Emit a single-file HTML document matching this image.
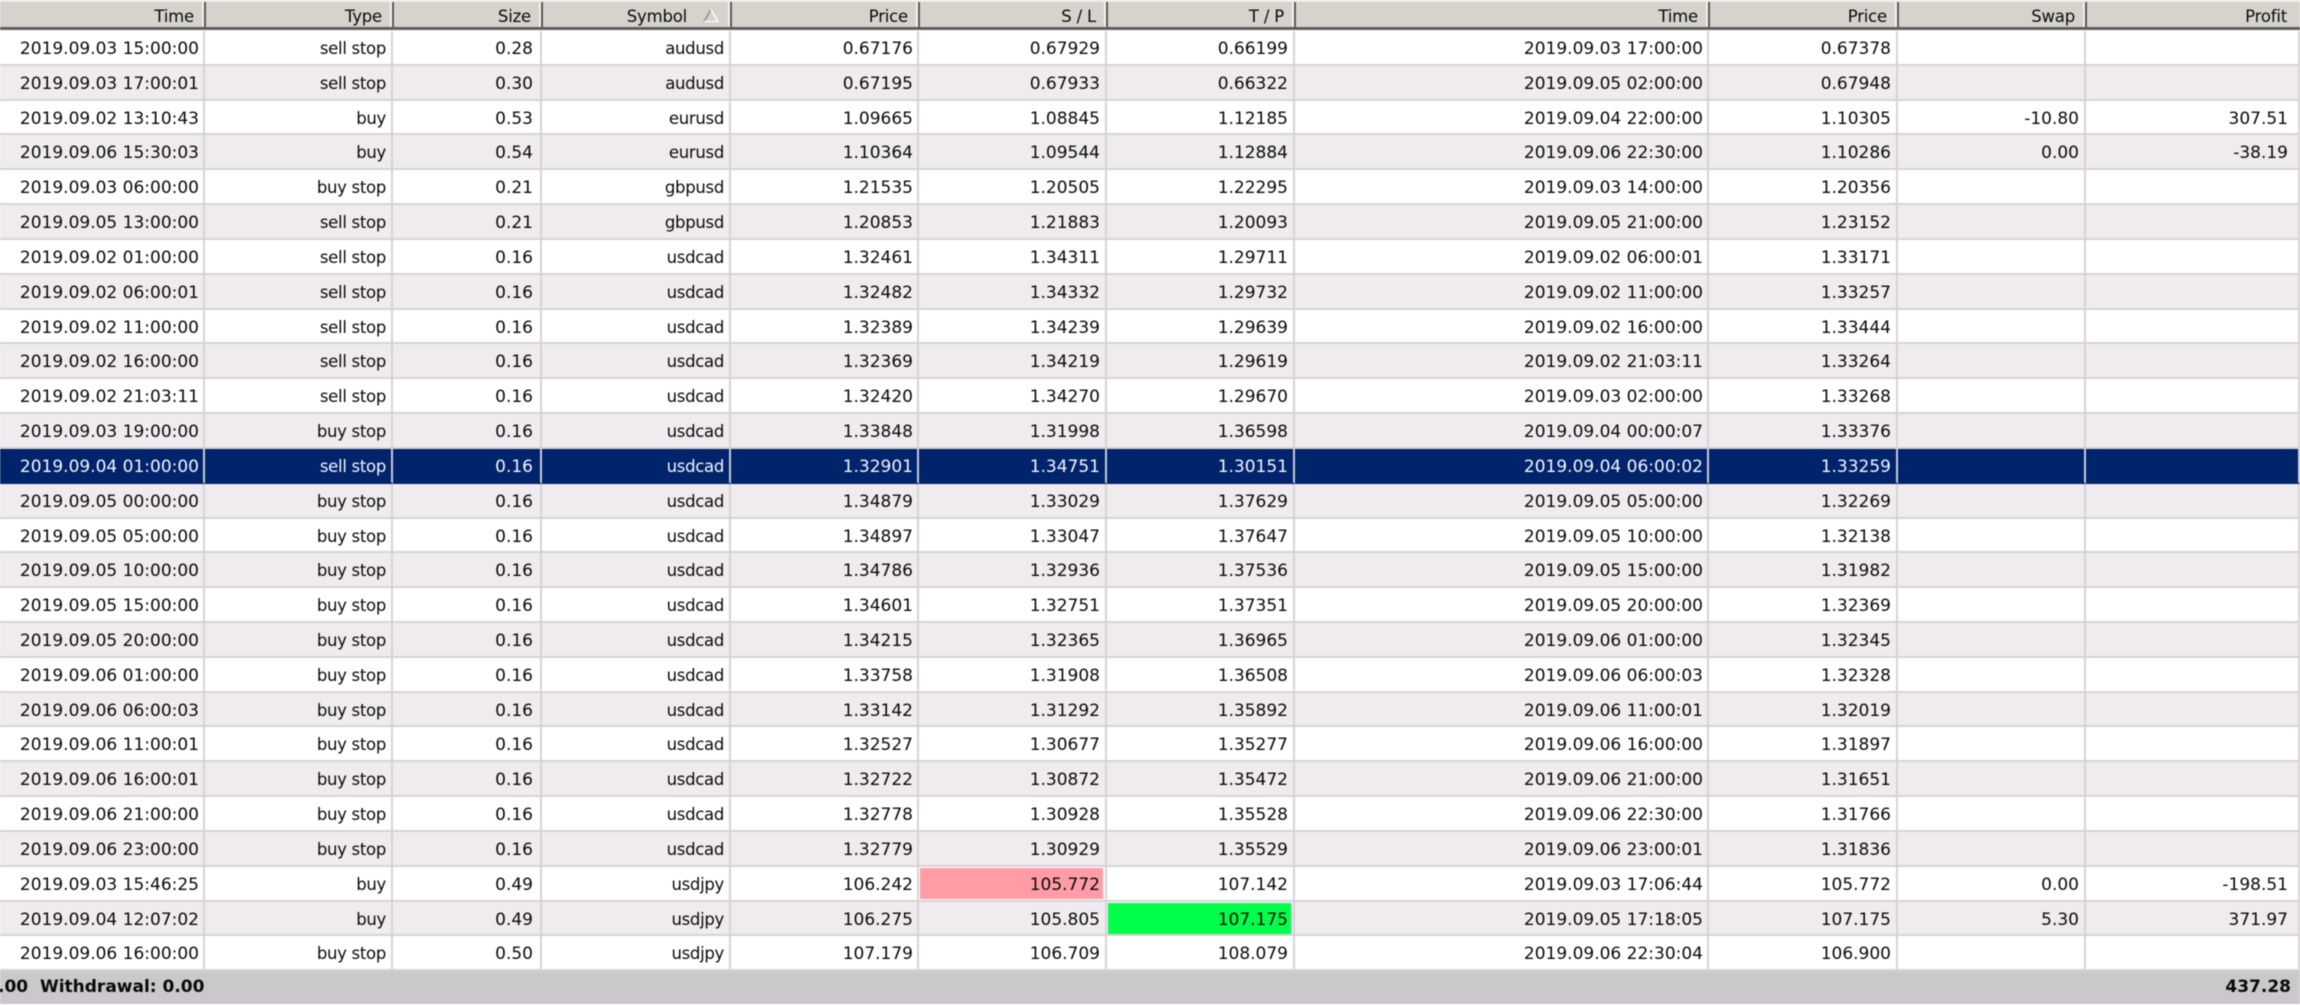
<!DOCTYPE html>
<html><head><meta charset="utf-8"><style>
html,body{margin:0;padding:0;background:#fff}
body{width:2300px;height:1004px;overflow:hidden;position:relative;font:17px/1 "DejaVu Sans","Liberation Sans",sans-serif;color:#0a0a0a}
#w{position:absolute;left:0;top:0;width:2300px;height:1004px;filter:blur(.45px)}
.h,.r{display:grid;position:absolute;left:0;width:2300px}
.h{grid-template-columns:204px 188px 149px 189px 188px 188px 188px 414px 189px 188px 215px;top:0;height:30px;background:#d6d3cd;box-sizing:border-box;border-bottom:3px solid #5f5f5f;border-top:2px solid #eeece6}
.r{grid-template-columns:205px 188px 149px 189px 188px 188px 188px 414px 189px 188px 214px}
.h div{box-sizing:border-box;text-align:right;padding:7px 10px 0 0;border-right:2px solid #5a5a5a;box-shadow:inset -2px 0 0 #f4f3ee;position:relative;margin-left:2px;margin-right:-2px;font-size:16.5px;letter-spacing:-.2px}
.r{height:34.83px}
.r div{box-sizing:border-box;text-align:right;padding:10px 5px 0 0;border-right:2px solid #d6d3d6;border-bottom:2px solid #d6d3d6;height:34.83px;white-space:nowrap}
.r div:nth-child(1),.r div:nth-child(5),.r div:nth-child(8){padding-right:4px}
.r div:nth-child(3){padding-right:7px}
.r div:nth-child(2),.r div:nth-child(4){font-size:16.5px;letter-spacing:-.3px}
.a{background:#efebef}
.s{background:#00246b;color:#f4f4ff}
.s div{border-right-color:#c9c9d6;border-bottom-color:#00246b}
.pk{position:absolute;left:920px;top:867.3px;width:183px;height:31px;background:#ff9ca5}
.gr{position:absolute;left:1108px;top:902.3px;width:183px;height:31px;background:#00ff4a}
.f{position:absolute;left:0;top:971px;width:2300px;height:33px;background:#cbc8cb;font-weight:bold;font-size:17px;color:#0a0a0a}
.f span{position:absolute;top:8px;white-space:pre}
#tb{position:absolute;left:0;top:.7px;width:2300px;height:1004px}
</style></head><body><div id="w">
<div id="tb">
<div class="r" style="top:30.2px"><div>2019.09.03 15:00:00</div><div>sell stop</div><div>0.28</div><div>audusd</div><div>0.67176</div><div>0.67929</div><div>0.66199</div><div>2019.09.03 17:00:00</div><div>0.67378</div><div></div><div></div></div>
<div class="r a" style="top:65.03px"><div>2019.09.03 17:00:01</div><div>sell stop</div><div>0.30</div><div>audusd</div><div>0.67195</div><div>0.67933</div><div>0.66322</div><div>2019.09.05 02:00:00</div><div>0.67948</div><div></div><div></div></div>
<div class="r" style="top:99.86px"><div>2019.09.02 13:10:43</div><div>buy</div><div>0.53</div><div>eurusd</div><div>1.09665</div><div>1.08845</div><div>1.12185</div><div>2019.09.04 22:00:00</div><div>1.10305</div><div>-10.80</div><div style="padding-right:10px">307.51</div></div>
<div class="r a" style="top:134.69px"><div>2019.09.06 15:30:03</div><div>buy</div><div>0.54</div><div>eurusd</div><div>1.10364</div><div>1.09544</div><div>1.12884</div><div>2019.09.06 22:30:00</div><div>1.10286</div><div>0.00</div><div style="padding-right:10px">-38.19</div></div>
<div class="r" style="top:169.52px"><div>2019.09.03 06:00:00</div><div>buy stop</div><div>0.21</div><div>gbpusd</div><div>1.21535</div><div>1.20505</div><div>1.22295</div><div>2019.09.03 14:00:00</div><div>1.20356</div><div></div><div></div></div>
<div class="r a" style="top:204.35px"><div>2019.09.05 13:00:00</div><div>sell stop</div><div>0.21</div><div>gbpusd</div><div>1.20853</div><div>1.21883</div><div>1.20093</div><div>2019.09.05 21:00:00</div><div>1.23152</div><div></div><div></div></div>
<div class="r" style="top:239.18px"><div>2019.09.02 01:00:00</div><div>sell stop</div><div>0.16</div><div>usdcad</div><div>1.32461</div><div>1.34311</div><div>1.29711</div><div>2019.09.02 06:00:01</div><div>1.33171</div><div></div><div></div></div>
<div class="r a" style="top:274.01px"><div>2019.09.02 06:00:01</div><div>sell stop</div><div>0.16</div><div>usdcad</div><div>1.32482</div><div>1.34332</div><div>1.29732</div><div>2019.09.02 11:00:00</div><div>1.33257</div><div></div><div></div></div>
<div class="r" style="top:308.84px"><div>2019.09.02 11:00:00</div><div>sell stop</div><div>0.16</div><div>usdcad</div><div>1.32389</div><div>1.34239</div><div>1.29639</div><div>2019.09.02 16:00:00</div><div>1.33444</div><div></div><div></div></div>
<div class="r a" style="top:343.67px"><div>2019.09.02 16:00:00</div><div>sell stop</div><div>0.16</div><div>usdcad</div><div>1.32369</div><div>1.34219</div><div>1.29619</div><div>2019.09.02 21:03:11</div><div>1.33264</div><div></div><div></div></div>
<div class="r" style="top:378.5px"><div>2019.09.02 21:03:11</div><div>sell stop</div><div>0.16</div><div>usdcad</div><div>1.32420</div><div>1.34270</div><div>1.29670</div><div>2019.09.03 02:00:00</div><div>1.33268</div><div></div><div></div></div>
<div class="r a" style="top:413.33px"><div>2019.09.03 19:00:00</div><div>buy stop</div><div>0.16</div><div>usdcad</div><div>1.33848</div><div>1.31998</div><div>1.36598</div><div>2019.09.04 00:00:07</div><div>1.33376</div><div></div><div></div></div>
<div class="r s" style="top:448.16px"><div>2019.09.04 01:00:00</div><div>sell stop</div><div>0.16</div><div>usdcad</div><div>1.32901</div><div>1.34751</div><div>1.30151</div><div>2019.09.04 06:00:02</div><div>1.33259</div><div></div><div></div></div>
<div class="r a" style="top:482.99px"><div>2019.09.05 00:00:00</div><div>buy stop</div><div>0.16</div><div>usdcad</div><div>1.34879</div><div>1.33029</div><div>1.37629</div><div>2019.09.05 05:00:00</div><div>1.32269</div><div></div><div></div></div>
<div class="r" style="top:517.82px"><div>2019.09.05 05:00:00</div><div>buy stop</div><div>0.16</div><div>usdcad</div><div>1.34897</div><div>1.33047</div><div>1.37647</div><div>2019.09.05 10:00:00</div><div>1.32138</div><div></div><div></div></div>
<div class="r a" style="top:552.65px"><div>2019.09.05 10:00:00</div><div>buy stop</div><div>0.16</div><div>usdcad</div><div>1.34786</div><div>1.32936</div><div>1.37536</div><div>2019.09.05 15:00:00</div><div>1.31982</div><div></div><div></div></div>
<div class="r" style="top:587.48px"><div>2019.09.05 15:00:00</div><div>buy stop</div><div>0.16</div><div>usdcad</div><div>1.34601</div><div>1.32751</div><div>1.37351</div><div>2019.09.05 20:00:00</div><div>1.32369</div><div></div><div></div></div>
<div class="r a" style="top:622.31px"><div>2019.09.05 20:00:00</div><div>buy stop</div><div>0.16</div><div>usdcad</div><div>1.34215</div><div>1.32365</div><div>1.36965</div><div>2019.09.06 01:00:00</div><div>1.32345</div><div></div><div></div></div>
<div class="r" style="top:657.14px"><div>2019.09.06 01:00:00</div><div>buy stop</div><div>0.16</div><div>usdcad</div><div>1.33758</div><div>1.31908</div><div>1.36508</div><div>2019.09.06 06:00:03</div><div>1.32328</div><div></div><div></div></div>
<div class="r a" style="top:691.97px"><div>2019.09.06 06:00:03</div><div>buy stop</div><div>0.16</div><div>usdcad</div><div>1.33142</div><div>1.31292</div><div>1.35892</div><div>2019.09.06 11:00:01</div><div>1.32019</div><div></div><div></div></div>
<div class="r" style="top:726.8px"><div>2019.09.06 11:00:01</div><div>buy stop</div><div>0.16</div><div>usdcad</div><div>1.32527</div><div>1.30677</div><div>1.35277</div><div>2019.09.06 16:00:00</div><div>1.31897</div><div></div><div></div></div>
<div class="r a" style="top:761.63px"><div>2019.09.06 16:00:01</div><div>buy stop</div><div>0.16</div><div>usdcad</div><div>1.32722</div><div>1.30872</div><div>1.35472</div><div>2019.09.06 21:00:00</div><div>1.31651</div><div></div><div></div></div>
<div class="r" style="top:796.46px"><div>2019.09.06 21:00:00</div><div>buy stop</div><div>0.16</div><div>usdcad</div><div>1.32778</div><div>1.30928</div><div>1.35528</div><div>2019.09.06 22:30:00</div><div>1.31766</div><div></div><div></div></div>
<div class="r a" style="top:831.29px"><div>2019.09.06 23:00:00</div><div>buy stop</div><div>0.16</div><div>usdcad</div><div>1.32779</div><div>1.30929</div><div>1.35529</div><div>2019.09.06 23:00:01</div><div>1.31836</div><div></div><div></div></div>
<div class="pk"></div><div class="gr"></div>
<div class="r" style="top:866.12px;background:transparent"><div>2019.09.03 15:46:25</div><div>buy</div><div>0.49</div><div>usdjpy</div><div>106.242</div><div>105.772</div><div>107.142</div><div>2019.09.03 17:06:44</div><div>105.772</div><div>0.00</div><div style="padding-right:10px">-198.51</div></div>
<div class="r a" style="top:900.95px;background:linear-gradient(#efebef,#efebef) 0 0/1108px 100% no-repeat,linear-gradient(#efebef,#efebef) 1291px 0/1009px 100% no-repeat"><div>2019.09.04 12:07:02</div><div>buy</div><div>0.49</div><div>usdjpy</div><div>106.275</div><div>105.805</div><div>107.175</div><div>2019.09.05 17:18:05</div><div>107.175</div><div>5.30</div><div style="padding-right:10px">371.97</div></div>
<div class="r" style="top:935.78px"><div>2019.09.06 16:00:00</div><div>buy stop</div><div>0.50</div><div>usdjpy</div><div>107.179</div><div>106.709</div><div>108.079</div><div>2019.09.06 22:30:04</div><div>106.900</div><div></div><div></div></div>
</div>
<div class="h"><div>Time</div><div>Type</div><div>Size</div><div style="padding-right:43px">Symbol<svg style="position:absolute;left:159px;top:6px" width="18" height="15" viewBox="0 0 18 15"><path d="M9 1.5 L2 13.5 H16" fill="none" stroke="#8f8d88" stroke-width="1.5"/><path d="M9 1.5 L16 13.5" fill="none" stroke="#fff" stroke-width="1.5"/><path d="M2 13.5 H16" stroke="#fff" stroke-width="1.5"/></svg></div><div>Price</div><div>S / L</div><div>T / P</div><div>Time</div><div>Price</div><div>Swap</div><div style="border-right:0;box-shadow:none;padding-right:15px">Profit</div></div>
<div class="f"><span style="left:-2px">.00  Withdrawal: 0.00</span><span style="right:9px">437.28</span></div>
</div></body></html>
